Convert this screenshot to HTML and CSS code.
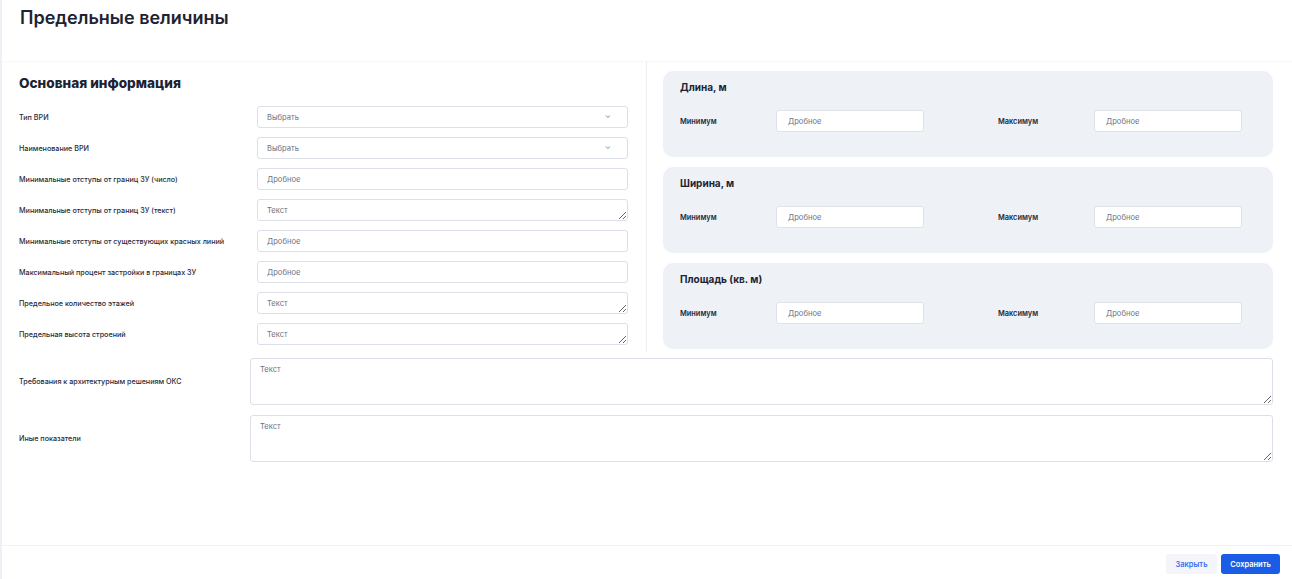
FILE: index.html
```html
<!DOCTYPE html>
<html lang="ru">
<head>
  <meta charset="UTF-8" />
  <title>Предельные величины</title>
  <link rel="stylesheet" href="styles.css">
</head>
<body>
  <div class="page">
    <header class="page-head">
      <h1>Предельные величины</h1>
    </header>

    <main class="content">
      <section class="main-info">
        <h2>Основная информация</h2>
        <div class="form-grid">
          <label>Тип ВРИ</label>
          <div class="select">Выбрать<span class="chevron">&#8964;</span></div>

          <label>Наименование ВРИ</label>
          <div class="select">Выбрать<span class="chevron">&#8964;</span></div>

          <label>Минимальные отступы от границ ЗУ (число)</label>
          <input type="text" placeholder="Дробное" />

          <label>Минимальные отступы от границ ЗУ (текст)</label>
          <textarea rows="1" placeholder="Текст"></textarea>

          <label>Минимальные отступы от существующих красных линий</label>
          <input type="text" placeholder="Дробное" />

          <label>Максимальный процент застройки в границах ЗУ</label>
          <input type="text" placeholder="Дробное" />

          <label>Предельное количество этажей</label>
          <textarea rows="1" placeholder="Текст"></textarea>

          <label>Предельная высота строений</label>
          <textarea rows="1" placeholder="Текст"></textarea>
        </div>
      </section>

      <section class="limits">
        <div class="limit-card">
          <h3>Длина, м</h3>
          <div class="limit-row">
            <label>Минимум</label>
            <input type="text" placeholder="Дробное" />
            <span></span>
            <label>Максимум</label>
            <input type="text" placeholder="Дробное" />
          </div>
        </div>
        <div class="limit-card">
          <h3>Ширина, м</h3>
          <div class="limit-row">
            <label>Минимум</label>
            <input type="text" placeholder="Дробное" />
            <span></span>
            <label>Максимум</label>
            <input type="text" placeholder="Дробное" />
          </div>
        </div>
        <div class="limit-card">
          <h3>Площадь (кв. м)</h3>
          <div class="limit-row">
            <label>Минимум</label>
            <input type="text" placeholder="Дробное" />
            <span></span>
            <label>Максимум</label>
            <input type="text" placeholder="Дробное" />
          </div>
        </div>
      </section>

      <section class="wide-fields">
        <label>Требования к архитектурным решениям ОКС</label>
        <textarea class="big" placeholder="Текст"></textarea>

        <label>Иные показатели</label>
        <textarea class="big" placeholder="Текст"></textarea>
      </section>
    </main>

    <footer class="page-foot">
      <button class="btn btn-light">Закрыть</button>
      <button class="btn btn-primary">Сохранить</button>
    </footer>
  </div>
</body>
</html>
```

FILE: styles.css
```css
* {
  box-sizing: border-box;
}
body {
  margin: 0;
  font-family: Inter, 'Noto Sans', sans-serif;
  color: #1c2333;
  background: #fff;
}
.page {
  height: 579px;
  display: flex;
  flex-direction: column;
  border-left: 2px solid #eef0f6;
}
.page-head {
  height: 62px;
  padding: 6px 18px 0;
  border-bottom: 1px solid #f7f8fa;
}
.page-head h1 {
  margin: 0;
  font-size: 18px;
  font-weight: 600;
  line-height: 24px;
}
.content {
  flex: 1;
  display: grid;
  grid-template-columns: 645px 626px;
  grid-template-rows: auto auto;
  align-content: start;
}
/* левая колонка */
.main-info {
  padding: 13px 0 7px 17px;
  border-right: 1px solid #eceef3;
  margin-top: -1px;
}
.main-info h2 {
  margin: 0 0 14px;
  font-size: 13.6px;
  font-weight: 800;
  line-height: 18px;
}
.form-grid {
  display: grid;
  grid-template-columns: 238px 371px;
  grid-auto-rows: 22px;
  row-gap: 9px;
  align-items: center;
}
label {
  font-size: 7.2px;
  font-weight: 500;
  color: #262c3a;
}
input, textarea, .select {
  font-family: inherit;
  font-size: 7.6px;
  color: #1c2333;
  background: #fff;
  border: 1px solid #dcdfe8;
  border-radius: 3px;
  padding: 0 9px;
  height: 22px;
  outline: none;
}
input::placeholder, textarea::placeholder {
  color: #6e7382;
}
textarea {
  padding-top: 6px;
  resize: vertical;
  line-height: 10px;
}
.select {
  display: flex;
  align-items: center;
  justify-content: space-between;
  color: #6e7382;
}
.chevron {
  font-size: 8px;
  color: #8d93a1;
  margin-top: -5px;
  margin-right: 7px;
}
/* правая колонка */
.limits {
  padding: 9px 0 0 16px;
  display: flex;
  flex-direction: column;
  gap: 10px;
}
.limit-card {
  background: #eef1f6;
  border-radius: 10px;
  height: 86px;
  padding: 10px 17px 0;
}
.limit-card h3 {
  margin: 0 0 17px;
  font-size: 10px;
  font-weight: 700;
  line-height: 12px;
}
.limit-row {
  display: grid;
  grid-template-columns: 96px 148px 74px 96px 148px;
  align-items: center;
}
.limit-row label {
  font-size: 7.4px;
  font-weight: 600;
}
.limit-row input {
  border-color: #dfe2ea;
  padding-left: 11px;
}
/* широкие поля */
.wide-fields {
  grid-column: 1 / -1;
  display: grid;
  grid-template-columns: 231px 1023px;
  row-gap: 10px;
  padding: 6px 0 0 17px;
  align-items: center;
}
textarea.big {
  height: 47px;
  padding: 6px 9px;
}
.page-foot {
  height: 34px;
  border-top: 1px solid #f1f3f7;
  display: flex;
  justify-content: flex-end;
  align-items: flex-start;
  gap: 4px;
  padding: 8px 12px 0;
}
.btn {
  height: 20px;
  border: none;
  border-radius: 3px;
  font-family: inherit;
  font-size: 7.5px;
  font-weight: 600;
  padding: 0 9px;
  cursor: pointer;
}
.btn-light {
  background: #f3f5fa;
  color: #3a6ef0;
  width: 51px;
}
.btn-primary {
  background: #1a5ce5;
  color: #fff;
  width: 59px;
}
```
